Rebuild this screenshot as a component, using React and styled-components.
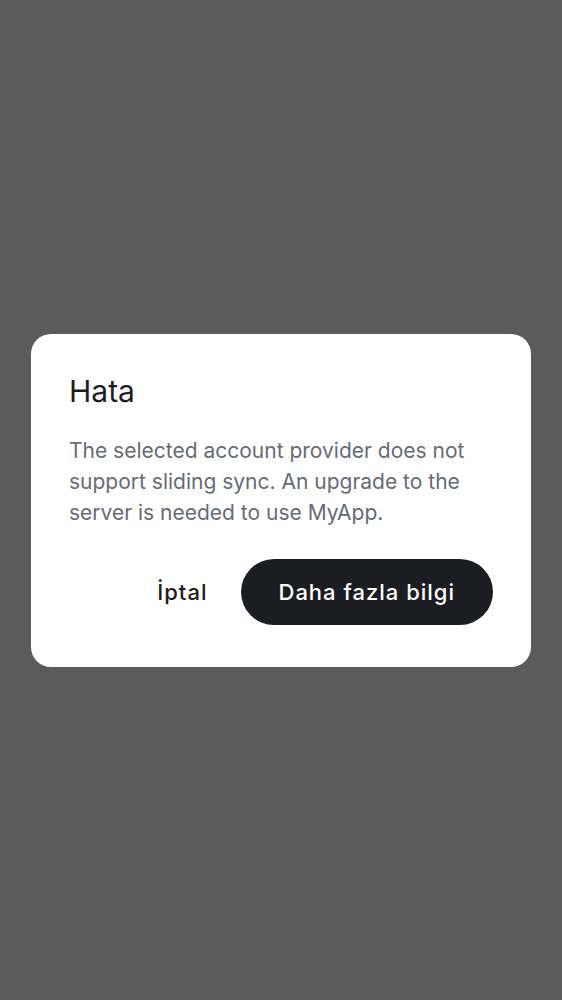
import React from 'react';
import styled, { createGlobalStyle } from 'styled-components';

const GlobalStyle = createGlobalStyle`
  html, body {
    margin: 0;
    padding: 0;
    height: 100%;
  }
  body {
    font-family: Inter, Roboto, "Noto Sans", sans-serif;
    background: #5b5b5b;
  }
  #root {
    height: 100%;
  }
`;

const Backdrop = styled.div`
  width: 100%;
  height: 100vh;
  background: #5b5b5b;
  display: flex;
  align-items: center;
  justify-content: center;
  padding: 0 31px;
  box-sizing: border-box;
`;

const Dialog = styled.div`
  width: 100%;
  background: #ffffff;
  border-radius: 20px;
  padding: 38px 38px 42px;
  box-sizing: border-box;
  display: flex;
  flex-direction: column;
`;

const Title = styled.h2`
  margin: 0;
  font-size: 30px;
  line-height: 38px;
  font-weight: 400;
  color: #1b1d22;
`;

const Message = styled.p`
  margin: 25px 0 0;
  font-size: 21px;
  line-height: 31px;
  color: #656c76;
`;

const Actions = styled.div`
  margin-top: 31px;
  display: flex;
  justify-content: flex-end;
  align-items: center;
  gap: 33px;
`;

const Button = styled.button`
  border: none;
  font-family: inherit;
  font-size: 22px;
  font-weight: 500;
  letter-spacing: 1px;
  height: 66px;
  border-radius: 33px;
  cursor: pointer;
  padding: ${(p) => (p.$primary ? '0 38px' : '0')};
  background: ${(p) => (p.$primary ? '#1b1d22' : 'transparent')};
  color: ${(p) => (p.$primary ? '#ffffff' : '#1b1d22')};
`;

export default function App() {
  return (
    <>
      <GlobalStyle />
      <Backdrop>
        <Dialog role="alertdialog">
          <Title>Hata</Title>
          <Message>
            The selected account provider does not support sliding sync. An
            upgrade to the server is needed to use MyApp.
          </Message>
          <Actions>
            <Button>İptal</Button>
            <Button $primary>Daha fazla bilgi</Button>
          </Actions>
        </Dialog>
      </Backdrop>
    </>
  );
}
